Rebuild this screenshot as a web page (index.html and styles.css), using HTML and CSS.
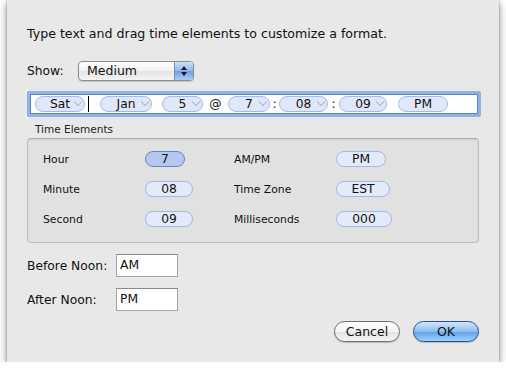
FILE: index.html
```html
<!DOCTYPE html>
<html lang="en">
<head>
  <meta charset="UTF-8">
  <title>Customize Time Format</title>
  <link rel="stylesheet" href="styles.css">
</head>
<body>
  <div class="sheet">
    <p class="intro">Type text and drag time elements to customize a format.</p>

    <!-- Show popup -->
    <div class="show-row">
      <span class="show-label">Show:</span>
      <div class="popup">
        <span class="popup-text">Medium</span>
        <span class="popup-arrows">
          <svg width="8" height="12" viewBox="0 0 8 12"><path d="M4 1 L7 5 H1 Z M4 11 L7 7 H1 Z" fill="#1a1a1a"/></svg>
        </span>
      </div>
    </div>

    <!-- Token field -->
    <div class="token-field">
      <span class="token menu"><b></b>Sat<i class="chev"></i></span>
      <span class="sep cursor"><span class="caret"></span></span>
      <span class="token menu"><b></b>Jan<i class="chev"></i></span>
      <span class="sep"></span>
      <span class="token menu"><b></b>5<i class="chev"></i></span>
      <span class="sep">@</span>
      <span class="token menu"><b></b>7<i class="chev"></i></span>
      <span class="sep">:</span>
      <span class="token menu"><b></b>08<i class="chev"></i></span>
      <span class="sep">:</span>
      <span class="token menu"><b></b>09<i class="chev"></i></span>
      <span class="sep"></span>
      <span class="token">PM</span>
    </div>

    <!-- Time elements box -->
    <div class="group-title">Time Elements</div>
    <div class="group">
      <span class="el-label">Hour</span>
      <span><span class="pill pill-hour selected">7</span></span>
      <span class="el-label">AM/PM</span>
      <span><span class="pill pill-ampm">PM</span></span>

      <span class="el-label">Minute</span>
      <span><span class="pill pill-min">08</span></span>
      <span class="el-label">Time Zone</span>
      <span><span class="pill pill-tz">EST</span></span>

      <span class="el-label">Second</span>
      <span><span class="pill pill-min">09</span></span>
      <span class="el-label">Milliseconds</span>
      <span><span class="pill pill-ms">000</span></span>
    </div>

    <!-- AM / PM symbols -->
    <div class="noon-row">
      <span class="noon-label">Before Noon:</span>
      <span class="text-field">AM</span>
    </div>
    <div class="noon-row">
      <span class="noon-label">After Noon:</span>
      <span class="text-field">PM</span>
    </div>

    <div class="buttons">
      <button class="btn">Cancel</button>
      <button class="btn default">OK</button>
    </div>
  </div>
</body>
</html>
```

FILE: styles.css
```css
/* Base */
body {
  margin: 0;
  background: #fff;
  font-family: 'DejaVu Sans', sans-serif;
  font-size: 12px;
  color: #111;
}

.sheet {
  box-sizing: border-box;
  margin-left: 7px;
  width: 492px;
  height: 362px;
  background: #e8e8e8;
  padding: 26px 20px 0 20px;
  box-shadow: 0 3px 8px rgba(0, 0, 0, 0.45), 0 0 2px rgba(0, 0, 0, 0.3);
}

.intro {
  margin: 0;
  line-height: 15px;
  font-size: 12.6px;
}

/* Show popup */
.show-row {
  display: flex;
  align-items: center;
  margin-top: 20px;
  height: 20px;
}

.show-label {
  width: 51px;
  font-size: 12.3px;
}

.popup {
  box-sizing: border-box;
  display: flex;
  width: 116px;
  height: 20px;
  border: 1px solid #8c8c8c;
  border-radius: 4px;
  overflow: hidden;
  background: linear-gradient(#ffffff, #f1f1f1 50%, #e4e4e4 51%, #f4f4f4);
  box-shadow: 0 1px 1px rgba(0, 0, 0, 0.15);
}

.popup-text {
  flex: 1;
  padding-left: 8px;
  line-height: 18px;
  font-size: 12.5px;
}

.popup-arrows {
  display: flex;
  align-items: center;
  justify-content: center;
  width: 18px;
  border-left: 1px solid #6d8fc6;
  background: linear-gradient(#cfe0f8, #8fb5ea 50%, #6f9fe2 51%, #a9cbf5);
}

/* Token field */
.token-field {
  box-sizing: border-box;
  display: grid;
  grid-template-columns: 50px 15px 52px 10px 41px 25px 42px 9px 49px 11px 48px 11px 50px;
  align-items: center;
  margin-top: 10px;
  width: 454px;
  height: 26px;
  padding-left: 5px;
  background: #fff;
  border: 3px solid #8fb2e4;
  box-shadow: inset 0 0 0 1px #5e86c6;
  border-radius: 2px;
}

.token {
  box-sizing: border-box;
  display: flex;
  align-items: center;
  justify-content: center;
  height: 16px;
  background: #dfe7f8;
  border: 1px solid #a4bae6;
  border-radius: 8px;
  font-size: 12.3px;
  line-height: 14px;
}

.token.menu {
  display: grid;
  grid-template-columns: 1fr auto 1fr;
  justify-items: center;
  padding: 0 3px;
}

.chev {
  box-sizing: border-box;
  justify-self: end;
  width: 6px;
  height: 6px;
  margin-top: -4px;
  border-right: 1px solid #a9b6cc;
  border-bottom: 1px solid #a9b6cc;
  transform: rotate(45deg);
}

.sep {
  display: flex;
  justify-content: center;
  font-size: 12.3px;
}

.sep.cursor {
  justify-content: flex-start;
}

.caret {
  width: 1px;
  height: 16px;
  background: #000;
  margin-left: 3px;
}

/* Time elements */
.group-title {
  margin-top: 5px;
  padding-left: 8px;
  font-size: 10.5px;
  line-height: 14px;
  color: #222;
}

.group {
  box-sizing: border-box;
  display: grid;
  grid-template-columns: 102px 89px 102px 1fr;
  grid-auto-rows: 16px;
  row-gap: 14px;
  align-items: center;
  margin-top: 2px;
  width: 452px;
  height: 105px;
  padding: 12px 0 0 15px;
  background: #e1e1e1;
  border: 1px solid #bdbdbd;
  border-top-color: #a8a8a8;
  border-radius: 4px;
  box-shadow: inset 0 1px 2px rgba(0, 0, 0, 0.08);
}

.el-label {
  font-size: 10.8px;
}

.pill {
  box-sizing: border-box;
  display: inline-flex;
  justify-content: center;
  align-items: center;
  height: 16px;
  background: #e3ebfb;
  border: 1px solid #9fbaea;
  border-radius: 8px;
  font-size: 12.3px;
  vertical-align: middle;
}

.pill.selected {
  background: #b5c9ef;
  border-color: #6086cc;
}

.pill-hour { width: 40px; }
.pill-min { width: 48px; }
.pill-ampm { width: 50px; }
.pill-tz { width: 54px; }
.pill-ms { width: 56px; }

/* AM/PM text fields */
.noon-row {
  display: flex;
  align-items: center;
  margin-top: 11px;
}

.noon-label {
  width: 89px;
  font-size: 12.3px;
}

.text-field {
  box-sizing: border-box;
  width: 62px;
  height: 23px;
  padding-left: 3px;
  line-height: 21px;
  background: #fff;
  border: 1px solid #a5a5a5;
  border-top-color: #8a8a8a;
  font-size: 12.3px;
}

/* Buttons */
.buttons {
  display: flex;
  justify-content: flex-end;
  gap: 13px;
  margin-top: 10px;
}

.btn {
  box-sizing: border-box;
  width: 66px;
  height: 21px;
  padding: 0;
  font-family: 'DejaVu Sans', sans-serif;
  font-size: 12.5px;
  color: #111;
  border: 1px solid #6e6e6e;
  border-radius: 11px;
  background: linear-gradient(#ffffff, #f3f3f3 50%, #e2e2e2 51%, #f6f6f6);
  box-shadow: 0 1px 1px rgba(0, 0, 0, 0.2);
}

.btn.default {
  border-color: #2b4f91;
  background: linear-gradient(#d5e6fb, #8cbcf2 50%, #5da0ec 51%, #9fd0fb);
}
```
